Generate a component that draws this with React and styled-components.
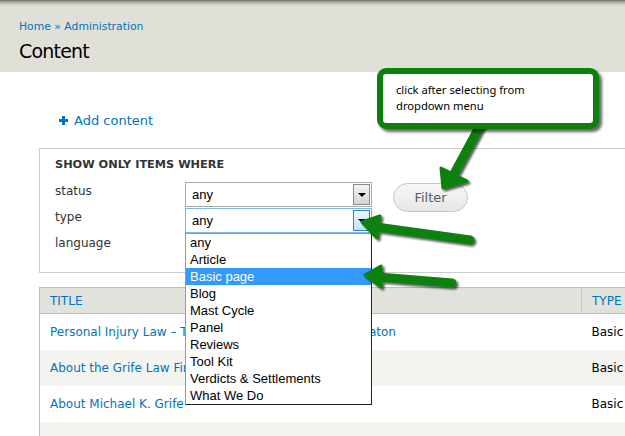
import React from 'react';
import styled, { createGlobalStyle } from 'styled-components';

const Global = createGlobalStyle`
  html, body { margin: 0; padding: 0; background: #fff; }
  body { font-family: "DejaVu Sans", Verdana, sans-serif; color: #333; }
  * { box-sizing: border-box; }
`;

const GREEN = '#0b800b';
const LINK = '#0074bd';

const Page = styled.div`
  position: relative;
  width: 625px;
  height: 436px;
  overflow: hidden;
  background: #fff;
`;

const Header = styled.header`
  height: 72px;
  padding: 19px 19px 0;
  background: linear-gradient(to bottom, #6c6c68 0px, #a9a9a3 2px, #d6d6ce 5px, #e0e0d8 7px);
`;

const Breadcrumb = styled.div`
  font-size: 10.8px;
  line-height: 16px;
  color: ${LINK};
  white-space: nowrap;
`;

const Title = styled.h1`
  margin: 4px 0 0;
  font-size: 19px;
  letter-spacing: -0.8px;
  line-height: 24px;
  font-weight: normal;
  color: #000;
`;

const Main = styled.main`
  padding-left: 39px;
`;

const ActionLink = styled.a`
  display: flex;
  align-items: center;
  gap: 6px;
  margin: 39px 0 0 20px;
  height: 18px;
  font-size: 13px;
  color: ${LINK};
  text-decoration: none;
`;

const Fieldset = styled.section`
  margin-top: 19px;
  width: 700px;
  border: 1px solid #ccc;
  border-right: none;
  padding: 8px 15px 13px;
`;

const Legend = styled.h2`
  margin: 0;
  font-size: 11.3px;
  line-height: 16px;
  font-weight: bold;
  text-transform: uppercase;
  color: #333;
`;

const FilterGrid = styled.div`
  margin-top: 9px;
  display: grid;
  grid-template-columns: 109px 187px auto;
  grid-auto-rows: 25px;
  row-gap: 1px;
  column-gap: 21px;
  align-items: start;
`;

const Label = styled.label`
  font-size: 12px;
  line-height: 18px;
  color: #333;
`;

const SelectWrap = styled.div`
  position: relative;
  grid-column: 2;
  height: 25px;
`;

const SelectBox = styled.div`
  height: 25px;
  display: flex;
  align-items: center;
  justify-content: space-between;
  padding: 0 1px 0 6px;
  border: 1px solid ${p => (p.$focused ? '#7eb4ea' : '#a9a9a9')};
  background: #fff;
  font-family: "Liberation Sans", Arial, sans-serif;
  font-size: 13px;
  color: #000;
`;

const ArrowButton = styled.span`
  width: 17px;
  height: 21px;
  display: flex;
  align-items: center;
  justify-content: center;
  border: 1px solid ${p => (p.$focused ? '#3c7fb1' : '#8a8a8a')};
  background: ${p =>
    p.$focused
      ? 'linear-gradient(to bottom, #eaf6fd, #bee6fd)'
      : 'linear-gradient(to bottom, #f2f2f2, #d4d4d4)'};
  &::after {
    content: '';
    border-left: 4px solid transparent;
    border-right: 4px solid transparent;
    border-top: 4px solid #000;
    margin-top: 1px;
  }
`;

const FilterButton = styled.button`
  grid-column: 3;
  grid-row: 1 / span 2;
  margin-top: 1px;
  width: 75px;
  height: 29px;
  border: 1px solid #c8c8c8;
  border-radius: 15px;
  background: linear-gradient(to bottom, #f7f7f7, #e6e6e6);
  font-family: "DejaVu Sans", Verdana, sans-serif;
  font-size: 13px;
  color: #5a5a5a;
  padding: 0;
`;

const DropList = styled.ul`
  position: absolute;
  z-index: 5;
  top: 100%;
  left: 0;
  width: 187px;
  margin: 0;
  padding: 0;
  list-style: none;
  background: #fff;
  border: 1px solid #222;
  border-left-color: #9a9a9a;
  border-top-color: #9a9a9a;
  font-family: "Liberation Sans", Arial, sans-serif;
  font-size: 13px;
  color: #000;
`;

const DropItem = styled.li`
  height: 17px;
  line-height: 17px;
  padding-left: 4px;
  white-space: nowrap;
  background: ${p => (p.$selected ? '#3399ff' : 'transparent')};
  color: ${p => (p.$selected ? '#fff' : '#000')};
`;

const Table = styled.table`
  margin-top: 14px;
  width: 700px;
  border-collapse: collapse;
  border-left: 1px solid #bebfb9;
  border-top: 1px solid #bebfb9;
  font-size: 12px;
`;

const Th = styled.th`
  height: 26px;
  padding: 0 10px;
  text-align: left;
  font-weight: normal;
  text-transform: uppercase;
  color: ${LINK};
  background: #e1e2dc;
  border-bottom: 1px solid #bebfb9;
  border-right: ${p => (p.$sep ? '1px solid #c9cac4' : 'none')};
  width: ${p => p.$w || 'auto'};
`;

const Tr = styled.tr`
  background: ${p => (p.$alt ? '#f3f4ef' : '#fff')};
`;

const Td = styled.td`
  height: 36px;
  padding: 0 10px;
  white-space: nowrap;
  color: ${p => (p.$link ? LINK : '#000')};
`;

const Callout = styled.div`
  position: absolute;
  z-index: 11;
  left: 377px;
  top: 68px;
  width: 222px;
  height: 61px;
  border: 6px solid ${GREEN};
  border-radius: 9px;
  background: #fff;
  box-shadow: 3px 3px 3px rgba(0, 0, 0, 0.6);
  padding: 8px 0 0 13px;
  font-family: "Noto Sans", "Open Sans", sans-serif;
  font-size: 11.2px;
  line-height: 16px;
  color: #000;
`;

const Overlay = styled.svg`
  position: absolute;
  z-index: 10;
  left: 0;
  top: 0;
  pointer-events: none;
`;

const Plus = () => (
  <svg width="9" height="9" viewBox="0 0 9 9">
    <path d="M4.5 0v9M0 4.5h9" stroke={LINK} strokeWidth="3" />
  </svg>
);

const Select = ({ value, focused, children }) => (
  <SelectWrap>
    <SelectBox $focused={focused}>
      <span>{value}</span>
      <ArrowButton $focused={focused} />
    </SelectBox>
    {children}
  </SelectWrap>
);

const types = ['any', 'Article', 'Basic page', 'Blog', 'Mast Cycle', 'Panel', 'Reviews', 'Tool Kit', 'Verdicts & Settlements', 'What We Do'];

const rows = [
  'Personal Injury Law – The Grife Law Offices of Boca Raton',
  'About the Grife Law Firm',
  'About Michael K. Grife',
];

export default function App() {
  return (
    <Page>
      <Global />
      <Header>
        <Breadcrumb>Home » Administration</Breadcrumb>
        <Title>Content</Title>
      </Header>
      <Main>
        <ActionLink href="#">
          <Plus />
          Add content
        </ActionLink>
        <Fieldset>
          <Legend>Show only items where</Legend>
          <FilterGrid>
            <Label>status</Label>
            <Select value="any" />
            <FilterButton>Filter</FilterButton>
            <Label>type</Label>
            <Select value="any" focused>
              <DropList>
                {types.map(t => (
                  <DropItem key={t} $selected={t === 'Basic page'}>{t}</DropItem>
                ))}
              </DropList>
            </Select>
            <Label>language</Label>
            <Select value="any" />
          </FilterGrid>
        </Fieldset>
        <Table>
          <thead>
            <tr>
              <Th $sep $w="542px">Title</Th>
              <Th>Type</Th>
            </tr>
          </thead>
          <tbody>
            {rows.map((r, i) => (
              <Tr key={r} $alt={i % 2 === 1}>
                <Td $link>{r}</Td>
                <Td>Basic page</Td>
              </Tr>
            ))}
            <Tr $alt>
              <Td $link></Td>
              <Td></Td>
            </Tr>
          </tbody>
        </Table>
      </Main>
      <Overlay width="625" height="436" viewBox="0 0 625 436">
        <defs>
          <filter id="sh" x="-20%" y="-20%" width="140%" height="160%">
            <feDropShadow dx="2" dy="2" stdDeviation="1.2" floodColor="#000" floodOpacity="0.65" />
          </filter>
        </defs>
        <g filter="url(#sh)" fill={GREEN} stroke={GREEN} strokeLinejoin="round" strokeLinecap="round">
          <line x1="482" y1="122" x2="455" y2="172" strokeWidth="9" />
          <polygon points="441,168 467,181 443,188" strokeWidth="3" />
          <line x1="470" y1="240" x2="376" y2="227" strokeWidth="9" />
          <polygon points="362,222 380,216 377,238" strokeWidth="3" />
          <line x1="452" y1="283" x2="378" y2="277" strokeWidth="9" />
          <polygon points="365,275 381,266 381,287" strokeWidth="3" />
        </g>
      </Overlay>
      <Callout>
        click after selecting from
        <br />
        dropdown menu
      </Callout>
    </Page>
  );
}
